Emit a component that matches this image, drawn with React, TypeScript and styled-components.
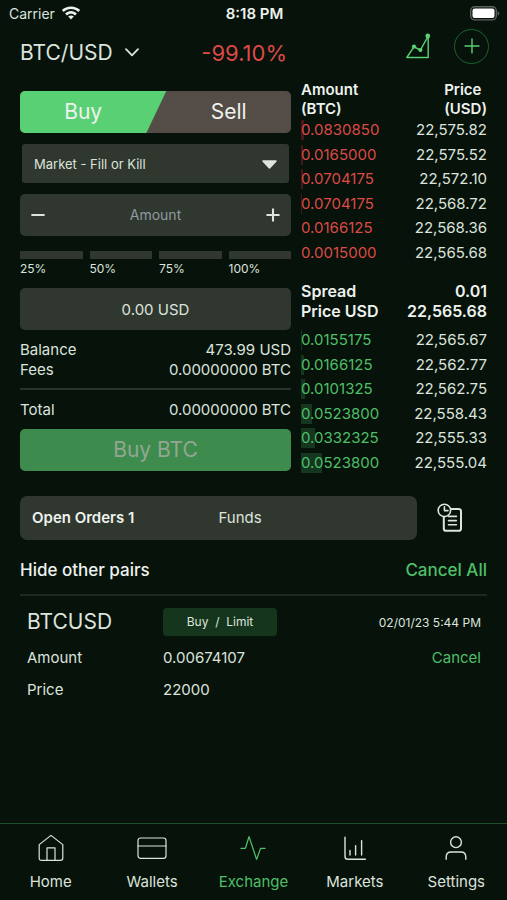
import React, { useState } from "react";
import styled, { createGlobalStyle } from "styled-components";

const color = {
  bg: "#06120a",
  panel: "#2f372f",
  text: "#dde3dd",
  strong: "#eef2ee",
  green: "#4fbf67",
  bright: "#5ad074",
  red: "#dd4a46",
  line: "#1d2a20",
};

const GlobalStyle = createGlobalStyle`
  * { box-sizing: border-box; }
  body {
    margin: 0;
    background: ${color.bg};
    color: ${color.text};
    font-family: Inter, "Liberation Sans", sans-serif;
    font-size: 15px;
    line-height: 20px;
  }
  button, input, select {
    font: inherit;
    color: inherit;
    background: none;
    border: 0;
    margin: 0;
    padding: 0;
  }
  button { cursor: pointer; }
  svg { display: block; }
`;

const Page = styled.div`
  min-height: 100vh;
  display: flex;
  flex-direction: column;
`;

const StatusBar = styled.div`
  display: grid;
  grid-template-columns: 1fr auto 1fr;
  align-items: center;
  height: 27px;
  padding: 0 7px 0 9px;
`;

const Carrier = styled.span`
  display: flex;
  align-items: center;
  gap: 6px;
  font-size: 14px;
`;

const Clock = styled.span`
  font-weight: 600;
  color: ${color.strong};
`;

const BatterySlot = styled.span`
  justify-self: end;
`;

const SplitGrid = styled.div`
  display: grid;
  grid-template-columns: minmax(0, 271fr) minmax(0, 186fr);
  column-gap: 10px;
  padding: 0 20px;
`;

const Header = styled(SplitGrid).attrs({ as: "header" })`
  height: 53px;
`;

const PairBar = styled.div`
  display: flex;
  align-items: center;
  justify-content: space-between;
  height: 51px;
  padding-right: 4px;
`;

const PairButton = styled.button`
  display: flex;
  align-items: center;
  gap: 12px;
  font-size: 21px;
  line-height: 28px;
`;

const Change = styled.span`
  font-size: 22px;
  line-height: 28px;
  color: ${color.red};
`;

const HeaderActions = styled.div`
  display: flex;
  align-items: center;
  justify-content: flex-end;
  gap: 23px;
  height: 38px;
  margin-right: -2px;
`;

const AddButton = styled.button`
  display: grid;
  place-items: center;
  width: 35px;
  height: 35px;
  border: 1px solid #17652f;
  border-radius: 50%;
  color: ${color.bright};
`;

const OrderForm = styled.form`
  display: flex;
  flex-direction: column;
  padding: 11px 0 4px;
`;

const SideToggle = styled.div`
  display: flex;
  height: 42px;
  border-radius: 5px;
  background: #544c46;
  overflow: hidden;
`;

const SideButton = styled.button<{ $side: "buy" | "sell" }>`
  flex: ${(p) => (p.$side === "buy" ? "0 0 54%" : "1")};
  padding-right: ${(p) => (p.$side === "buy" ? "20px" : "0")};
  background: ${(p) => (p.$side === "buy" ? color.bright : "transparent")};
  clip-path: ${(p) =>
    p.$side === "buy"
      ? "polygon(0 0, 100% 0, calc(100% - 20px) 100%, 0 100%)"
      : "none"};
  font-size: 21px;
  color: ${color.strong};
`;

const TypeField = styled.div`
  position: relative;
  margin: 11px 2px 0;

  svg {
    position: absolute;
    right: 12px;
    top: 16px;
    pointer-events: none;
  }
`;

const TypeSelect = styled.select`
  appearance: none;
  display: block;
  width: 100%;
  height: 39px;
  padding: 0 32px 0 12px;
  border-radius: 3px;
  background: ${color.panel};
  font-size: 13px;
`;

const Stepper = styled.div`
  display: flex;
  align-items: center;
  height: 42px;
  margin-top: 11px;
  padding: 0 11px;
  border-radius: 5px;
  background: ${color.panel};
`;

const StepperInput = styled.input`
  flex: 1;
  min-width: 0;
  text-align: center;
  font-size: 14px;

  &::placeholder {
    color: #929a9f;
    opacity: 1;
  }
`;

const Percents = styled.div`
  display: grid;
  grid-template-columns: repeat(4, 1fr);
  gap: 7px;
  margin-top: 15px;
`;

const PercentButton = styled.button`
  border-top: 8px solid ${color.panel};
  font-size: 12px;
  line-height: 20px;
  text-align: left;
`;

const TotalInput = styled.input`
  width: 100%;
  height: 42px;
  margin-top: 9px;
  border-radius: 5px;
  background: ${color.panel};
  text-align: center;
`;

const Summary = styled.dl`
  margin: 10px 0 0;
`;

const SummaryRow = styled.div<{ $ruled?: boolean }>`
  display: flex;
  justify-content: space-between;
  padding-top: ${(p) => (p.$ruled ? "10px" : "0")};
  margin-top: ${(p) => (p.$ruled ? "8px" : "0")};
  border-top: ${(p) => (p.$ruled ? "2px solid #29322b" : "0")};

  dd { margin: 0; }
`;

const SubmitButton = styled.button`
  height: 42px;
  margin-top: 9px;
  border-radius: 5px;
  background: #3d8c4e;
  color: #94a693;
  font-size: 21px;
`;

const Book = styled.table`
  display: flex;
  flex-direction: column;
  height: 100%;
  text-align: left;
`;

const BookHead = styled.thead`
  display: block;

  tr {
    display: flex;
    justify-content: space-between;
  }
  th {
    padding: 0;
    font-weight: 600;
    line-height: 19px;
    color: ${color.strong};
  }
`;

const BookLevels = styled.tbody`
  display: flex;
  flex: 1;
  flex-direction: column;
`;

const BookRow = styled.tr`
  display: flex;
  flex: 1;
  align-items: center;
  justify-content: space-between;
`;

const AmountCell = styled.td<{ $tone: "ask" | "bid"; $depth: number }>`
  padding: 0;
  flex: 1;
  color: ${(p) => (p.$tone === "ask" ? color.red : color.green)};
  background: linear-gradient(
      ${(p) => (p.$tone === "ask" ? "#4a1618, #4a1618" : "#15371f, #15371f")}
    )
    left / ${(p) => p.$depth}px 20px no-repeat;
`;

const PriceCell = styled.td`
  padding: 0;
`;

const Spread = styled.tbody`
  display: block;
  padding: 16px 0 7px;

  tr {
    display: flex;
    justify-content: space-between;
  }
  th, td {
    padding: 0;
    font-size: 16px;
    font-weight: 600;
    color: ${color.strong};
  }
`;

const OrdersBar = styled.div`
  display: flex;
  align-items: center;
  gap: 20px;
  margin-top: 21px;
  padding: 0 44px 0 20px;
`;

const Tabs = styled.div`
  display: grid;
  grid-template-columns: 1fr 1fr;
  flex: 1;
  height: 44px;
  border-radius: 7px;
  background: ${color.panel};
`;

const Tab = styled.button<{ $active: boolean }>`
  padding-left: ${(p) => (p.$active ? "12px" : "0")};
  text-align: left;
  font-weight: ${(p) => (p.$active ? 600 : 400)};
  color: ${(p) => (p.$active ? color.strong : color.text)};
`;

const OrdersHeader = styled.div`
  display: flex;
  justify-content: space-between;
  margin: 0 20px;
  padding: 18px 0 12px;
  border-bottom: 2px solid ${color.line};
`;

const TextButton = styled.button<{ $green?: boolean; $large?: boolean }>`
  font-size: ${(p) => (p.$large ? "17px" : "15px")};
  line-height: ${(p) => (p.$large ? "24px" : "20px")};
  font-weight: ${(p) => (p.$large ? 500 : 400)};
  color: ${(p) => (p.$green ? color.green : color.strong)};
`;

const Order = styled.article`
  display: grid;
  grid-template-columns: 136px auto 1fr;
  align-items: center;
  row-gap: 12px;
  padding: 12px 26px 12px 27px;
`;

const OrderPair = styled.h2`
  margin: 0;
  font-size: 21px;
  line-height: 28px;
  font-weight: 400;
`;

const OrderValue = styled.span`
  min-width: 114px;
`;

const OrderKind = styled.span`
  min-width: 114px;
  border-radius: 4px;
  background: #15351d;
  font-size: 12px;
  line-height: 28px;
  text-align: center;
  white-space: pre;
`;

const OrderEnd = styled.div`
  justify-self: end;
`;

const OrderTime = styled.time`
  font-size: 12px;
`;

const Nav = styled.nav`
  display: grid;
  grid-template-columns: repeat(5, 1fr);
  height: 77px;
  margin-top: auto;
  border-top: 1px solid #1f4d2a;
`;

const NavLink = styled.a<{ $active?: boolean }>`
  display: flex;
  flex-direction: column;
  align-items: center;
  gap: 10px;
  padding-top: 10px;
  text-decoration: none;
  color: ${(p) => (p.$active ? color.green : color.text)};
`;

const line = {
  fill: "none",
  stroke: "currentColor",
  strokeLinecap: "round" as const,
  strokeLinejoin: "round" as const,
};

const WifiIcon = () => (
  <svg width="20" height="15" viewBox="0 0 20 15" fill={color.strong} aria-hidden="true">
    <path d="M10 0.4C6.5 0.4 3.2 1.7 0.8 4.1L2.7 6.1C4.7 4.2 7.2 3.1 10 3.1S15.3 4.2 17.3 6.1L19.2 4.1C16.8 1.7 13.5 0.4 10 0.4Z" />
    <path d="M10 5C7.7 5 5.7 5.9 4.1 7.4L6 9.4C7.1 8.4 8.5 7.7 10 7.7S12.9 8.4 14 9.4L15.9 7.4C14.3 5.9 12.3 5 10 5Z" />
    <path d="M10 9.5C8.9 9.5 8 9.9 7.2 10.6L10 13.6L12.8 10.6C12 9.9 11.1 9.5 10 9.5Z" />
  </svg>
);

const BatteryIcon = () => (
  <svg width="30" height="15" viewBox="0 0 30 15" aria-hidden="true">
    <rect x="0.7" y="0.7" width="25.6" height="13.2" rx="4" fill="none" stroke="#5c645e" strokeWidth="1.4" />
    <rect x="2.5" y="2.5" width="22" height="9.6" rx="2" fill="#fff" />
    <path d="M27.6 5.2C28.7 5.6 29.3 6.4 29.3 7.4S28.7 9.2 27.6 9.6Z" fill="#5c645e" />
  </svg>
);

const ChevronIcon = () => (
  <svg width="14" height="9" viewBox="0 0 14 9" {...line} strokeWidth="1.8" aria-hidden="true">
    <path d="M1 1.2L7 7.4L13 1.2" />
  </svg>
);

const ChartIcon = () => (
  <svg width="26" height="26" viewBox="0 0 26 26" {...line} stroke={color.bright} strokeWidth="1.4" aria-hidden="true">
    <path d="M1.8 24.5L9 13.8L15.4 17L23.2 3.2V24.5Z" />
    <g fill={color.bright} stroke="none">
      <circle cx="9" cy="13.6" r="2.1" />
      <circle cx="15.4" cy="17" r="2.1" />
      <circle cx="22.8" cy="3" r="2.4" />
    </g>
  </svg>
);

const PlusIcon = ({ size, weight }: { size: number; weight: number }) => (
  <svg width={size} height={size} viewBox="0 0 16 16" {...line} strokeLinecap="butt" strokeWidth={weight} aria-hidden="true">
    <path d="M8 0.5V15.5M0.5 8H15.5" />
  </svg>
);

const MinusIcon = () => (
  <svg width="14" height="14" viewBox="0 0 14 14" {...line} strokeWidth="2.2" aria-hidden="true">
    <path d="M1.2 7H12.8" />
  </svg>
);

const CaretIcon = () => (
  <svg width="15" height="9" viewBox="0 0 15 9" fill={color.text} aria-hidden="true">
    <path d="M1.2 0.3H13.8C14.8 0.3 15 1 14.4 1.7L8.6 8.1C7.9 8.8 7.1 8.8 6.4 8.1L0.6 1.7C0 1 0.2 0.3 1.2 0.3Z" />
  </svg>
);

const HistoryIcon = () => (
  <svg width="26" height="30" viewBox="0 0 26 30" {...line} aria-hidden="true">
    <path d="M14.6 6H21.6Q24 6 24 8.4V25.4Q24 27.8 21.6 27.8H9.2Q6.8 27.8 6.8 25.4V14" strokeWidth="2" />
    <circle cx="7.4" cy="7.4" r="6.2" strokeWidth="1.6" />
    <path d="M7.4 3.8V7.6H11" strokeWidth="1.6" />
    <path d="M11.5 13.4H19.4M11.5 17.6H19.4M11.5 21.8H19.4" strokeWidth="1.6" />
  </svg>
);

const HomeIcon = () => (
  <svg width="28" height="28" viewBox="0 0 28 28" {...line} strokeWidth="1.2" aria-hidden="true">
    <path d="M2.2 10.6L14 1.4L25.8 10.6V24Q25.8 26.4 23.4 26.4H4.6Q2.2 26.4 2.2 24Z" />
    <path d="M10 26.4V13.8H18V26.4" />
  </svg>
);

const CardIcon = () => (
  <svg width="30" height="28" viewBox="0 0 30 28" {...line} strokeWidth="1.2" aria-hidden="true">
    <rect x="1" y="4" width="28" height="20.4" rx="2.6" />
    <path d="M1 12H29" />
  </svg>
);

const PulseIcon = () => (
  <svg width="26" height="28" viewBox="0 0 26 28" {...line} strokeWidth="1.3" aria-hidden="true">
    <path d="M1 14.4H5.4L9 2.6L16.6 25.4L20.6 14.4H25" />
  </svg>
);

const BarsIcon = () => (
  <svg width="24" height="28" viewBox="0 0 24 28" {...line} strokeWidth="1.4" aria-hidden="true">
    <path d="M2 3.2V22.4Q2 25.2 4.8 25.2H22.4" />
    <path d="M7 16.4V21M12.6 11.6V21M18.6 6.6V21" />
  </svg>
);

const UserIcon = () => (
  <svg width="24" height="28" viewBox="0 0 24 28" {...line} strokeWidth="1.4" aria-hidden="true">
    <circle cx="12" cy="8.2" r="5.4" />
    <path d="M2.2 25.2V23Q2.2 18 7.2 18H16.8Q21.8 18 21.8 23V25.2" />
  </svg>
);

type Level = [amount: string, price: string, depth: number];

const asks: Level[] = [
  ["0.0830850", "22,575.82", 3],
  ["0.0165000", "22,575.52", 2],
  ["0.0704175", "22,572.10", 2],
  ["0.0704175", "22,568.72", 1],
  ["0.0166125", "22,568.36", 0],
  ["0.0015000", "22,565.68", 0],
];

const bids: Level[] = [
  ["0.0155175", "22,565.67", 1],
  ["0.0166125", "22,562.77", 3],
  ["0.0101325", "22,562.75", 4],
  ["0.0523800", "22,558.43", 11],
  ["0.0332325", "22,555.33", 14],
  ["0.0523800", "22,555.04", 21],
];

const Levels = ({ tone, rows }: { tone: "ask" | "bid"; rows: Level[] }) => (
  <BookLevels>
    {rows.map(([amount, price, depth]) => (
      <BookRow key={price}>
        <AmountCell $tone={tone} $depth={depth}>{amount}</AmountCell>
        <PriceCell>{price}</PriceCell>
      </BookRow>
    ))}
  </BookLevels>
);

const navItems = [
  { label: "Home", Icon: HomeIcon },
  { label: "Wallets", Icon: CardIcon },
  { label: "Exchange", Icon: PulseIcon },
  { label: "Markets", Icon: BarsIcon },
  { label: "Settings", Icon: UserIcon },
];

export default function App() {
  const [amount, setAmount] = useState("");

  return (
    <Page>
      <GlobalStyle />
      <StatusBar>
        <Carrier>Carrier <WifiIcon /></Carrier>
        <Clock>8:18 PM</Clock>
        <BatterySlot><BatteryIcon /></BatterySlot>
      </StatusBar>

      <Header>
        <PairBar>
          <PairButton type="button">BTC/USD <ChevronIcon /></PairButton>
          <Change>-99.10%</Change>
        </PairBar>
        <HeaderActions>
          <button type="button" aria-label="Chart"><ChartIcon /></button>
          <AddButton type="button" aria-label="Add"><PlusIcon size={16} weight={1.4} /></AddButton>
        </HeaderActions>
      </Header>

      <SplitGrid>
        <OrderForm onSubmit={(e) => e.preventDefault()}>
          <SideToggle>
            <SideButton type="button" $side="buy" aria-pressed="true">Buy</SideButton>
            <SideButton type="button" $side="sell" aria-pressed="false">Sell</SideButton>
          </SideToggle>
          <TypeField>
            <TypeSelect aria-label="Order type">
              <option>Market - Fill or Kill</option>
            </TypeSelect>
            <CaretIcon />
          </TypeField>
          <Stepper>
            <button type="button" aria-label="Decrease amount"><MinusIcon /></button>
            <StepperInput
              aria-label="Amount"
              placeholder="Amount"
              value={amount}
              onChange={(e) => setAmount(e.target.value)}
            />
            <button type="button" aria-label="Increase amount"><PlusIcon size={14} weight={2.4} /></button>
          </Stepper>
          <Percents>
            {["25%", "50%", "75%", "100%"].map((p) => (
              <PercentButton type="button" key={p}>{p}</PercentButton>
            ))}
          </Percents>
          <TotalInput aria-label="Total in USD" readOnly value="0.00 USD" />
          <Summary>
            <SummaryRow><dt>Balance</dt><dd>473.99 USD</dd></SummaryRow>
            <SummaryRow><dt>Fees</dt><dd>0.00000000 BTC</dd></SummaryRow>
            <SummaryRow $ruled><dt>Total</dt><dd>0.00000000 BTC</dd></SummaryRow>
          </Summary>
          <SubmitButton type="submit">Buy BTC</SubmitButton>
        </OrderForm>

        <Book>
          <BookHead>
            <tr>
              <th scope="col">Amount<br />(BTC)</th>
              <th scope="col">Price<br />(USD)</th>
            </tr>
          </BookHead>
          <Levels tone="ask" rows={asks} />
          <Spread>
            <tr><th scope="row">Spread</th><td>0.01</td></tr>
            <tr><th scope="row">Price USD</th><td>22,565.68</td></tr>
          </Spread>
          <Levels tone="bid" rows={bids} />
        </Book>
      </SplitGrid>

      <OrdersBar>
        <Tabs role="tablist">
          <Tab type="button" role="tab" aria-selected="true" $active>Open Orders 1</Tab>
          <Tab type="button" role="tab" aria-selected="false" $active={false}>Funds</Tab>
        </Tabs>
        <button type="button" aria-label="Order history"><HistoryIcon /></button>
      </OrdersBar>

      <OrdersHeader>
        <TextButton type="button" $large>Hide other pairs</TextButton>
        <TextButton type="button" $large $green>Cancel All</TextButton>
      </OrdersHeader>

      <Order>
        <OrderPair>BTCUSD</OrderPair>
        <OrderKind>Buy  /  Limit</OrderKind>
        <OrderEnd><OrderTime>02/01/23 5:44 PM</OrderTime></OrderEnd>
        <span>Amount</span>
        <OrderValue>0.00674107</OrderValue>
        <OrderEnd><TextButton type="button" $green>Cancel</TextButton></OrderEnd>
        <span>Price</span>
        <OrderValue>22000</OrderValue>
      </Order>

      <Nav aria-label="Main">
        {navItems.map(({ label, Icon }) => (
          <NavLink key={label} href={`#${label.toLowerCase()}`} $active={label === "Exchange"}>
            <Icon />
            {label}
          </NavLink>
        ))}
      </Nav>
    </Page>
  );
}
